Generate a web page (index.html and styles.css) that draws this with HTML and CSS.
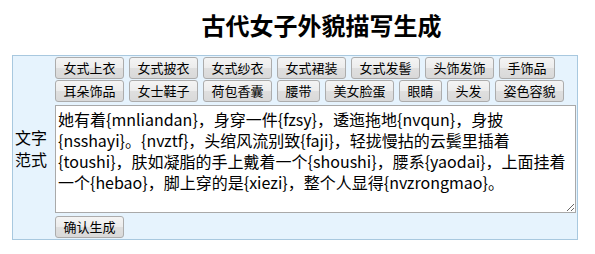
FILE: index.html
```html
<!DOCTYPE html>
<html lang="zh-CN">
<head>
<meta charset="utf-8">
<title>古代女子外貌描写生成</title>
<link rel="stylesheet" href="styles.css">
</head>
<body>
<h1 class="title">古代女子外貌描写生成</h1>
<div class="panel">
  <div class="label">文字范式</div>
  <div class="content">
    <div class="btn-row">
      <button class="btn">女式上衣</button>
      <button class="btn">女式披衣</button>
      <button class="btn">女式纱衣</button>
      <button class="btn">女式裙装</button>
      <button class="btn">女式发髻</button>
      <button class="btn">头饰发饰</button>
      <button class="btn">手饰品</button>
    </div>
    <div class="btn-row">
      <button class="btn">耳朵饰品</button>
      <button class="btn">女士鞋子</button>
      <button class="btn">荷包香囊</button>
      <button class="btn">腰带</button>
      <button class="btn">美女脸蛋</button>
      <button class="btn">眼睛</button>
      <button class="btn">头发</button>
      <button class="btn">姿色容貌</button>
    </div>
    <textarea class="template">她有着{mnliandan}，身穿一件{fzsy}，逶迤拖地{nvqun}，身披{nsshayi}。{nvztf}，头绾风流别致{faji}，轻拢慢拈的云鬓里插着{toushi}，肤如凝脂的手上戴着一个{shoushi}，腰系{yaodai}，上面挂着一个{hebao}，脚上穿的是{xiezi}，整个人显得{nvzrongmao}。</textarea>
    <div class="actions">
      <button class="btn">确认生成</button>
    </div>
  </div>
</div>
</body>
</html>
```

FILE: styles.css
```css
body {
  margin: 8px;
  background: #ffffff;
  font-family: "Noto Sans CJK SC", "Noto Sans", sans-serif;
  color: #000;
}

.title {
  margin: 1px 0 14px 0;
  padding-left: 48px;
  font-size: 24px;
  line-height: 32px;
  font-weight: bold;
  text-align: center;
}

.panel {
  margin-left: 4px;
  width: 566px;
  box-sizing: border-box;
  border: 1px solid #a8c8df;
  background: #e6f3fd;
  display: flex;
}

.label {
  width: 42px;
  box-sizing: border-box;
  padding: 0 2px;
  font-size: 16px;
  line-height: 22px;
  display: flex;
  align-items: center;
}

.content {
  flex: 1;
  padding: 1px 1px 1px 0;
  display: flex;
  flex-direction: column;
}

.btn-row {
  display: flex;
  gap: 5px;
  margin-bottom: 1px;
}

.btn {
  height: 22px;
  box-sizing: border-box;
  padding: 0 7.5px;
  margin: 0;
  font-family: "Noto Sans CJK SC", "Noto Sans", sans-serif;
  font-size: 13px;
  line-height: 20px;
  color: #000;
  border: 1px solid #acacac;
  border-radius: 3px;
  background: linear-gradient(to bottom, #f4f4f4 0%, #ececec 50%, #dfdfdf 51%, #d9d9d9 100%);
}

.template {
  display: block;
  margin: 2px 0 3px 0;
  width: 521px;
  height: 108px;
  box-sizing: border-box;
  padding: 3px 2px;
  border: 1px solid #a9a9a9;
  font-family: "Noto Sans CJK SC", "Noto Sans", sans-serif;
  font-size: 16px;
  line-height: 21px;
  color: #000;
  background: #fff;
}

.actions {
  display: flex;
}
```
